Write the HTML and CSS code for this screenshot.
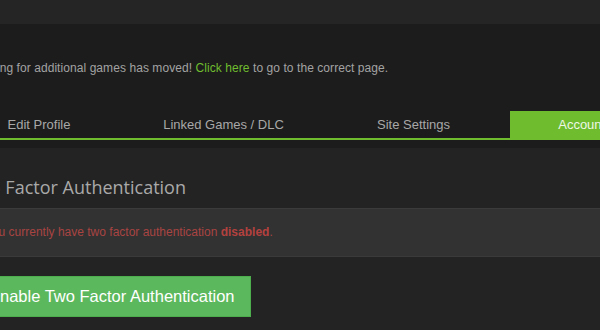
FILE: index.html
```html
<!DOCTYPE html>
<html>
<head>
<meta charset="utf-8">
<link rel="stylesheet" href="styles.css">
</head>
<body>
<div class="topbar"></div>
<div class="main">
  <p class="notice">Tracking for additional games has moved! <a class="link" href="#">Click here</a> to go to the correct page.</p>
  <nav class="tabs">
    <a class="tab" href="#">Edit Profile</a>
    <a class="tab" href="#">Linked Games / DLC</a>
    <a class="tab" href="#">Site Settings</a>
    <a class="tab active" href="#">Account Settings</a>
  </nav>
</div>
<div class="content">
  <div class="inner">
    <h2 class="title">Two Factor Authentication</h2>
    <div class="alert">You currently have two factor authentication <strong>disabled</strong>.</div>
    <button class="btn">Enable Two Factor Authentication</button>
  </div>
</div>
</body>
</html>
```
FILE: styles.css
```css
html, body {
  margin: 0;
  padding: 0;
  background: #1c1c1c;
  overflow: hidden;
  width: 600px;
  height: 330px;
  font-family: "Liberation Sans", Arial, sans-serif;
}
.topbar {
  height: 24px;
  background: #252525;
}
.main {
  padding-top: 36px;
  padding-bottom: 8px;
  background: #1c1c1c;
}
.notice {
  margin: 0 0 0 -33px;
  font-size: 12px;
  line-height: 16px;
  letter-spacing: 0.07px;
  color: #a3a3a3;
  white-space: nowrap;
}
.link {
  color: #6fbd2f;
  text-decoration: none;
}
.tabs {
  margin: 35px 0 0 -52px;
  display: grid;
  grid-template-columns: 182px 187px 193px 194px;
  width: 756px;
  border-bottom: 2px solid #6fbd2f;
}
.tab {
  display: block;
  height: 27px;
  line-height: 27px;
  font-size: 13px;
  text-align: center;
  color: #a8a8a8;
  text-decoration: none;
  white-space: nowrap;
}
.tab.active {
  background: #6fbd2f;
  color: #eef7e6;
}
.content {
  background: #232323;
  height: 182px;
  padding-top: 27px;
  box-sizing: border-box;
}
.inner {
  margin-left: -30px;
  width: 800px;
}
.title {
  margin: 0 0 9px -4px;
  font-family: "Open Sans", sans-serif;
  font-weight: 400;
  font-size: 18px;
  line-height: 24px;
  color: #a9a9a9;
  white-space: nowrap;
}
.alert {
  background: #323232;
  border-top: 1px solid #3b3b3b;
  border-bottom: 1px solid #3a3a3a;
  padding: 15px;
  font-size: 12px;
  line-height: 17px;
  color: #a94442;
  white-space: nowrap;
}
.alert strong {
  color: #b4413f;
}
.btn {
  display: block;
  margin: 19px 0 0 3px;
  background: #5cb85c;
  border: 1px solid #4cae4c;
  padding: 10px 15px;
  font-family: "Liberation Sans", Arial, sans-serif;
  font-size: 16.5px;
  line-height: 19px;
  color: #fff;
  white-space: nowrap;
}
```
